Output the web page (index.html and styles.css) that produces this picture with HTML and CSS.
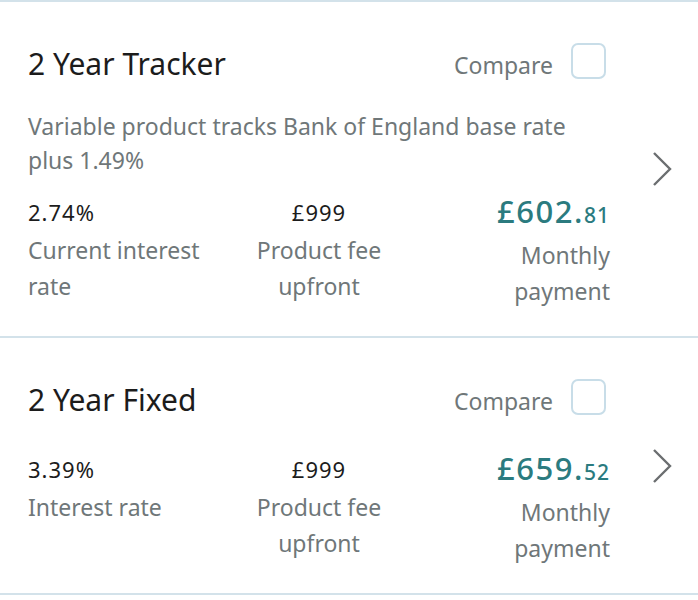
FILE: index.html
```html
<!DOCTYPE html>
<html lang="en">

<head>
    <meta charset="UTF-8">
    <meta name="viewport" content="width=device-width, initial-scale=1.0">
    <title>Mortgage products</title>
    <link rel="stylesheet" href="styles.css">
</head>

<body>
    <div class="product-list">

        <div class="product">
            <div class="product-body">
                <div class="product-head">
                    <h2 class="product-name">2 Year Tracker</h2>
                    <label class="compare">
                        Compare
                        <input type="checkbox">
                        <span class="check-box"></span>
                    </label>
                </div>
                <p class="product-desc">Variable product tracks Bank of England base rate plus 1.49%</p>
                <div class="stats">
                    <div class="stat">
                        <div class="stat-value">2.74%</div>
                        <div class="stat-label">Current interest rate</div>
                    </div>
                    <div class="stat stat-middle">
                        <div class="stat-value">£999</div>
                        <div class="stat-label">Product fee<br>upfront</div>
                    </div>
                    <div class="stat stat-right">
                        <div class="price">£602.<span class="pence">81</span></div>
                        <div class="stat-label">Monthly<br>payment</div>
                    </div>
                </div>
            </div>
            <div class="product-arrow">
                <svg width="20" height="36" viewBox="0 0 20 36">
                    <path d="M2 2 L18 18 L2 34" fill="none" stroke="#6b6e70" stroke-width="2.4" />
                </svg>
            </div>
        </div>

        <div class="product">
            <div class="product-body">
                <div class="product-head">
                    <h2 class="product-name">2 Year Fixed</h2>
                    <label class="compare">
                        Compare
                        <input type="checkbox">
                        <span class="check-box"></span>
                    </label>
                </div>
                <div class="stats">
                    <div class="stat">
                        <div class="stat-value">3.39%</div>
                        <div class="stat-label">Interest rate</div>
                    </div>
                    <div class="stat stat-middle">
                        <div class="stat-value">£999</div>
                        <div class="stat-label">Product fee<br>upfront</div>
                    </div>
                    <div class="stat stat-right">
                        <div class="price">£659.<span class="pence">52</span></div>
                        <div class="stat-label">Monthly<br>payment</div>
                    </div>
                </div>
            </div>
            <div class="product-arrow">
                <svg width="20" height="36" viewBox="0 0 20 36">
                    <path d="M2 2 L18 18 L2 34" fill="none" stroke="#6b6e70" stroke-width="2.4" />
                </svg>
            </div>
        </div>

    </div>
</body>

</html>
```

FILE: styles.css
```css
body {
    margin: 0;
    background-color: #fff;
    font-family: "Noto Sans", "Open Sans", sans-serif;
    color: #1c1c1c;
}

.product-list {
    border-top: 2px solid #d3e2ea;
}

.product {
    display: flex;
    border-bottom: 2px solid #d3e2ea;
}

.product-body {
    flex: 1;
    padding: 43px 0 27px 28px;
}

.product-head {
    display: flex;
    align-items: center;
    justify-content: space-between;
    height: 36px;
    padding-right: 4px;
}

.product-name {
    margin: 0;
    font-size: 30px;
    font-weight: normal;
}

.compare {
    display: flex;
    align-items: center;
    gap: 18px;
    font-size: 23px;
    color: #6f7779;
    padding-top: 4px;
}

.compare input {
    display: none;
}

.check-box {
    width: 31px;
    height: 32px;
    border: 2px solid #c8dde8;
    border-radius: 7px;
    margin-top: -8px;
}

.product-desc {
    max-width: 560px;
    margin: 28px 0 0;
    font-size: 23px;
    line-height: 34px;
    color: #6f7779;
}

.stats {
    display: grid;
    grid-template-columns: 1fr 1fr 1fr;
    margin-top: 18px;
}

/* no description: a bit more air under the title */
.product-head + .stats {
    margin-top: 35px;
}

.stat-middle {
    text-align: center;
}

.stat-right {
    text-align: right;
}

.stat-value {
    font-size: 22px;
    line-height: 34px;
    margin-bottom: 3px;
    letter-spacing: 1px;
}

.stat-label {
    font-size: 23px;
    line-height: 36px;
    color: #6f7779;
}

.price {
    font-size: 31px;
    line-height: 32px;
    margin-bottom: 6px;
    font-weight: 500;
    letter-spacing: 1.5px;
    color: #2b7b7f;
}

.pence {
    font-size: 21px;
    letter-spacing: 1px;
}

.product-arrow {
    width: 88px;
    display: flex;
    align-items: center;
    padding-left: 42px;
    box-sizing: border-box;
}
```
